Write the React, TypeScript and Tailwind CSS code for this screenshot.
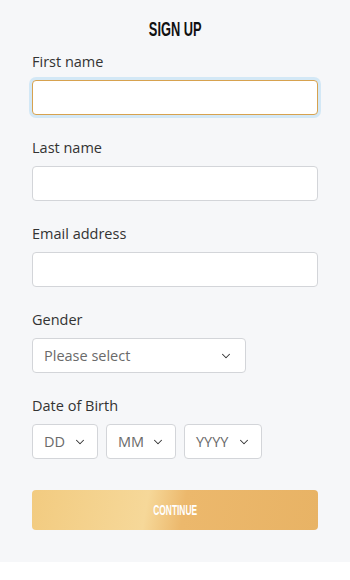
import { ChevronDown } from 'lucide-react';

const body = { fontFamily: '"Open Sans", "Noto Sans", sans-serif' };
const condensed = { fontFamily: '"Liberation Sans", Arial, sans-serif' };

function Field({ label, focused }: { label: string; focused?: boolean }) {
  return (
    <div className="mb-[23px]">
      <label className="block text-[14.5px] leading-5 text-[#333] mb-2">{label}</label>
      <div
        className={
          focused
            ? 'h-[35px] w-full rounded-[4px] bg-white border-[1.5px] border-[#d7a24f] shadow-[0_0_0_3px_#d3e8f6]'
            : 'h-[35px] w-full rounded-[4px] bg-white border-[1.5px] border-[#d3d5d9]'
        }
      />
    </div>
  );
}

function SelectBox({ text, className, padRight }: { text: string; className: string; padRight?: string }) {
  return (
    <div
      className={`h-[35px] rounded-[4px] bg-white border-[1.5px] border-[#d3d5d9] flex items-center justify-between pl-[11px] ${padRight ?? 'pr-[10px]'} ${className}`}
    >
      <span className="text-[14.5px] text-[#6a6a6a]">{text}</span>
      <ChevronDown className="w-[14px] h-[14px] text-[#333]" strokeWidth={1.8} />
    </div>
  );
}

export default function App() {
  return (
    <div className="w-[350px] bg-white" style={body}>
      <div className="bg-[#f6f7f9] px-8 pt-[17px] pb-8">
        <h1 className="text-center text-[21px] leading-6 font-bold text-[#111] mb-[11px]" style={condensed}>
          <span className="inline-block scale-x-[0.61]">SIGN UP</span>
        </h1>

        <Field label="First name" focused />
        <Field label="Last name" />
        <Field label="Email address" />

        <div className="mb-[23px]">
          <label className="block text-[14.5px] leading-5 text-[#333] mb-2">Gender</label>
          <SelectBox text="Please select" className="w-[214px]" padRight="pr-[12px]" />
        </div>

        <div className="mb-[31px]">
          <label className="block text-[14.5px] leading-5 text-[#333] mb-2">Date of Birth</label>
          <div className="flex gap-2">
            <SelectBox text="DD" className="w-[66px]" />
            <SelectBox text="MM" className="w-[70px]" />
            <SelectBox text="YYYY" className="w-[78px]" />
          </div>
        </div>

        <button
          className="h-10 w-full rounded-[4px] text-white text-[15px] font-bold bg-[linear-gradient(100deg,#f2cb80_0%,#f6d899_40%,#ecb86c_53%,#e8b365_100%)]"
          style={condensed}
        >
          <span className="inline-block scale-x-[0.56]">CONTINUE</span>
        </button>
      </div>
    </div>
  );
}
